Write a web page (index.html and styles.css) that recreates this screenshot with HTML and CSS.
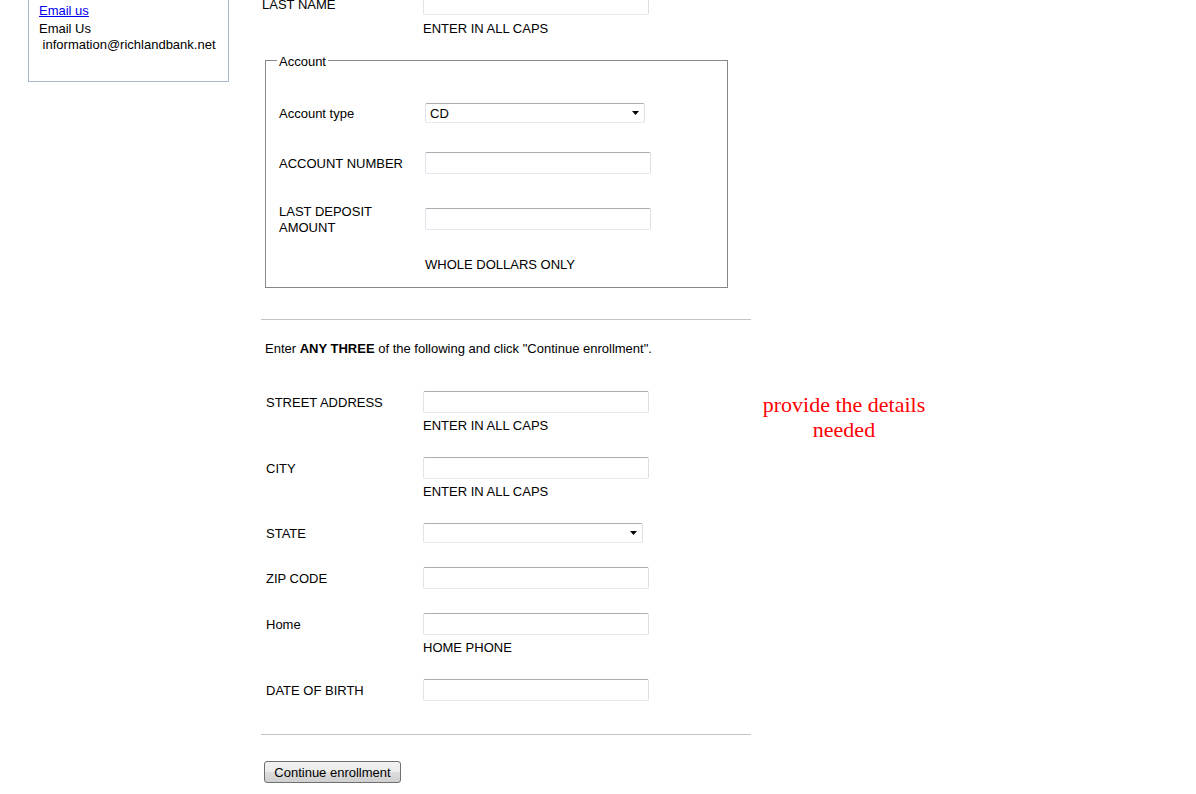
FILE: index.html
```html
<!DOCTYPE html>
<html lang="en">
<head>
  <meta charset="UTF-8">
  <meta name="viewport" content="width=device-width, initial-scale=1.0">
  <title>Online Banking Enrollment</title>
  <link rel="stylesheet" href="styles.css">
</head>
<body>
  <div class="page">
    <!-- Contact box -->
    <div class="sidebar">
      <a href="#" class="email-link">Email us</a>
      <div class="contact-title">Email Us</div>
      <div>&nbsp;information@richlandbank.net</div>
    </div>

    <form class="enroll" action="#">
      <div class="row name-row">
        <label for="lastName">LAST NAME</label>
        <input type="text" id="lastName">
        <span class="hint">ENTER IN ALL CAPS</span>
      </div>

      <fieldset class="account">
        <legend>Account</legend>
        <div class="fs-row">
          <label for="accountType">Account type</label>
          <select id="accountType">
            <option>CD</option>
            <option>Checking</option>
            <option>Savings</option>
          </select>
        </div>
        <div class="fs-row">
          <label for="accountNumber">ACCOUNT NUMBER</label>
          <input type="text" id="accountNumber">
        </div>
        <div class="fs-row two-line">
          <label for="lastDeposit">LAST DEPOSIT<br>AMOUNT</label>
          <input type="text" id="lastDeposit">
        </div>
        <div class="fs-note">WHOLE DOLLARS ONLY</div>
      </fieldset>

      <hr class="divider">

      <p class="intro">Enter <b>ANY THREE</b> of the following and click "Continue enrollment".</p>

      <div class="fields">
        <div class="row">
          <label for="street">STREET ADDRESS</label>
          <input type="text" id="street">
          <span class="hint">ENTER IN ALL CAPS</span>
        </div>
        <div class="row">
          <label for="city">CITY</label>
          <input type="text" id="city">
          <span class="hint">ENTER IN ALL CAPS</span>
        </div>
        <div class="row">
          <label for="state">STATE</label>
          <select id="state">
            <option></option>
          </select>
        </div>
        <div class="row">
          <label for="zip">ZIP CODE</label>
          <input type="text" id="zip">
        </div>
        <div class="row">
          <label for="homePhone">Home</label>
          <input type="text" id="homePhone">
          <span class="hint">HOME PHONE</span>
        </div>
        <div class="row">
          <label for="dob">DATE OF BIRTH</label>
          <input type="text" id="dob">
        </div>
      </div>

      <hr class="divider bottom">

      <button type="button" class="continue-btn">Continue enrollment</button>
    </form>

    <div class="note">provide the details needed</div>
  </div>
</body>
</html>
```

FILE: styles.css
```css
/* Enrollment page */
body {
  margin: 0;
  font-family: "Liberation Sans", Arial, sans-serif;
  font-size: 13px;
  color: #000;
  background: #fff;
}
.page {
  display: flex;
  align-items: flex-start;
  margin-top: -7px;
}

/* contact box on the left */
.sidebar {
  box-sizing: border-box;
  width: 201px;
  margin-left: 28px;
  padding: 9px 10px 28px 10px;
  border: 1px solid #a6b8cf;
  line-height: 16px;
}
.email-link {
  display: block;
  color: #0000ee;
}
.contact-title {
  margin-top: 2px;
}

/* form column */
.enroll {
  width: 490px;
  margin-left: 32px;
}
.row {
  display: grid;
  grid-template-columns: 157px auto;
  align-items: center;
  justify-items: start;
  line-height: 15px;
}
.row .hint {
  grid-column: 2;
  margin-top: 5px;
}
.name-row {
  grid-template-columns: 161px auto;
  padding-left: 1px;
}
.name-row .hint {
  margin-top: 6px;
}

input[type="text"] {
  box-sizing: border-box;
  width: 226px;
  height: 22px;
  margin: 0;
  padding: 2px 3px;
  border: 1px solid;
  border-color: #abadb3 #dbdfe6 #e3e9ef #e2e3ea;
  border-radius: 2px;
  font: 13px "Liberation Sans", Arial, sans-serif;
}
select {
  box-sizing: border-box;
  width: 220px;
  height: 20px;
  margin: 0;
  padding: 0 16px 0 4px;
  border: 1px solid;
  border-color: #abadb3 #dbdfe6 #e3e9ef #e2e3ea;
  border-radius: 2px;
  font: 13px "Liberation Sans", Arial, sans-serif;
  color: #000;
  -webkit-appearance: none;
  appearance: none;
  background: #fff url("data:image/svg+xml;utf8,<svg xmlns='http://www.w3.org/2000/svg' width='7' height='4'><path d='M0 0h7L3.5 4z' fill='black'/></svg>") no-repeat right 5px center;
}

/* account fieldset */
.account {
  box-sizing: border-box;
  width: 463px;
  margin: 15px 0 0 4px;
  padding: 33px 13px 15px 13px;
  border: 1px solid #878787;
}
.account legend {
  padding: 3px 2px 0 2px;
  margin-left: -2px;
  line-height: 16px;
}
.fs-row {
  display: grid;
  grid-template-columns: 146px auto;
  align-items: center;
  justify-items: start;
  line-height: 16px;
}
.fs-row label {
  padding-top: 2px;
}
.fs-row + .fs-row {
  margin-top: 29px;
}
.fs-row + .two-line {
  margin-top: 28px;
}
.fs-note {
  margin-top: 21px;
  padding-left: 146px;
  line-height: 15px;
}

.divider {
  height: 0;
  margin: 31px 0 0 0;
  border: 0;
  border-top: 1px solid #c4c4c4;
}
.divider.bottom {
  margin-top: 33px;
}

.intro {
  margin: 21px 0 0 0;
  padding-left: 4px;
  line-height: 15px;
}

.fields {
  margin-top: 35px;
  padding-left: 5px;
}
.fields .row + .row {
  margin-top: 24px;
}

.continue-btn {
  box-sizing: border-box;
  width: 137px;
  height: 22px;
  margin: 26px 0 0 3px;
  padding: 0;
  border: 1px solid #707070;
  border-radius: 3px;
  background: linear-gradient(#f2f2f2 0%, #ebebeb 50%, #dddddd 51%, #cfcfcf 100%);
  font: 13px "Liberation Sans", Arial, sans-serif;
  color: #000;
}

/* message to the right of the form */
.note {
  width: 186px;
  margin-top: 399px;
  text-align: center;
  font-family: "Liberation Serif", "Times New Roman", serif;
  font-size: 22px;
  line-height: 25px;
  color: #ff0000;
}
```
